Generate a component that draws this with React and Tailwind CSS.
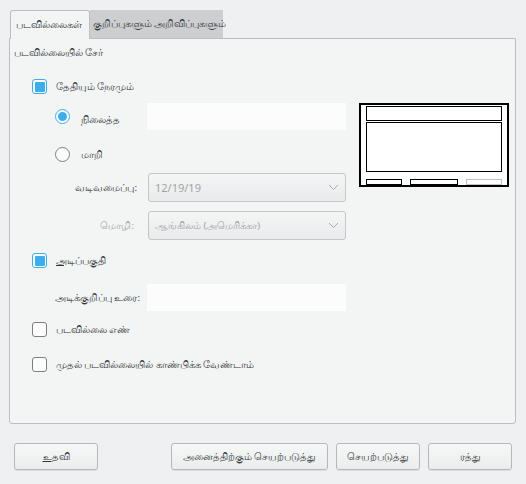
import React from 'react';

const Check = ({ checked }) => (
    <span className={`w-[15px] h-[15px] shrink-0 rounded-[3px] border flex items-center justify-center bg-[#fcfcfc] ${checked ? 'border-[#3daee9]' : 'border-[#7c7e80]'}`}>
        {checked && <span className="w-[10px] h-[10px] bg-[#3daee9] rounded-[1px]" />}
    </span>
);

const Radio = ({ checked }) => (
    <span className={`w-[15px] h-[15px] shrink-0 rounded-full border flex items-center justify-center bg-[#fcfcfc] ${checked ? 'border-[#3daee9]' : 'border-[#7c7e80]'}`}>
        {checked && <span className="w-[9px] h-[9px] bg-[#3daee9] rounded-full" />}
    </span>
);

const Chevron = () => (
    <svg width="11" height="7" viewBox="0 0 11 7" className="shrink-0">
        <path d="M1 1 L5.5 5.5 L10 1" fill="none" stroke="#a8aaac" strokeWidth="1" />
    </svg>
);

const Combo = ({ value }) => (
    <div className="w-[198px] h-[29px] rounded-[3px] border border-[#c4c6c8] bg-gradient-to-b from-[#f4f5f5] to-[#e9eaeb] flex items-center justify-between pl-[6px] pr-[6px] text-[#a2a4a6]">
        <span className={value.startsWith('1') ? 'text-[11px]' : ''}>{value}</span>
        <Chevron />
    </div>
);

const Button = ({ children, className = '' }) => (
    <button className={`h-[27px] rounded-[3px] border border-[#b6b8ba] bg-gradient-to-b from-[#f6f7f7] to-[#ebecec] shadow-[0_1px_0_rgba(0,0,0,0.08)] text-[#31363b] flex items-center justify-center ${className}`}>
        {children}
    </button>
);

const Preview = () => (
    <svg width="150" height="84" viewBox="0 0 150 84" className="shrink-0">
        <rect x="1" y="1" width="148" height="82" fill="#fff" stroke="#000" strokeWidth="2" />
        <rect x="7.5" y="3.5" width="135" height="14" fill="none" stroke="#000" strokeWidth="1" />
        <rect x="7.5" y="19.5" width="135" height="49" fill="none" stroke="#000" strokeWidth="1" />
        <rect x="7.5" y="76.5" width="35" height="5" fill="none" stroke="#000" strokeWidth="1" />
        <rect x="51.5" y="76.5" width="47" height="5" fill="none" stroke="#000" strokeWidth="1" />
        <rect x="107.5" y="76.5" width="35" height="5" fill="none" stroke="#c2c2c2" strokeWidth="1" />
    </svg>
);

const App = () => {
    return (
        <div className="w-[526px] h-[484px] bg-[#eff0f1] pl-[9px] pt-[10px] text-[9.6px] leading-[14px] whitespace-nowrap text-[#31363b] font-['Noto_Sans','DejaVu_Sans',sans-serif]">
            {/* tabs */}
            <div className="flex ml-px h-[28px]">
                <div className="w-[80px] h-[29px] -mb-px relative z-10 bg-[#f3f4f4] border border-b-0 border-[#bcbebf] rounded-t-[3px] flex items-center pl-[5px]">
                    படவில்லைகள்
                </div>
                <div className="w-[133px] h-[28px] bg-[#cdcecf] flex items-center pl-[3px]">
                    குறிப்புகளும் அறிவிப்புகளும்
                </div>
            </div>

            {/* panel */}
            <div className="w-[507px] h-[386px] bg-[#f3f4f4] border border-[#bcbebf] rounded-b-[3px] flex flex-col">
                <div className="mt-[7px] pl-[4px] h-[14px]">படவில்லையில் சேர்</div>

                <div className="mt-[19px] pl-[22px] h-[15px] flex items-center gap-[9px]">
                    <Check checked />
                    <span>தேதியும் நேரமும்</span>
                </div>

                <div className="mt-[9px] flex">
                    <div className="flex flex-col">
                        <div className="h-[27px] flex items-center pl-[45px]">
                            <Radio checked />
                            <span className="ml-[11px] w-[66px] mt-[6px]">நிலைத்த</span>
                            <div className="w-[199px] h-[27px] bg-[#fcfcfc]" />
                        </div>
                        <div className="mt-[17px] h-[15px] flex items-center pl-[45px]">
                            <Radio />
                            <span className="ml-[11px]">மாறி</span>
                        </div>
                        <div className="mt-[11px] flex items-center">
                            <span className="w-[127px] text-right">வடிவமைப்பு:</span>
                            <div className="ml-[11px]"><Combo value="12/19/19" /></div>
                        </div>
                        <div className="mt-[9px] flex items-center">
                            <span className="w-[124px] text-right text-[#a2a4a6]">மொழி:</span>
                            <div className="ml-[14px]"><Combo value="ஆங்கிலம் (அமெரிக்கா)" /></div>
                        </div>
                    </div>
                    <div className="ml-[13px]">
                        <Preview />
                    </div>
                </div>

                <div className="mt-[13px] pl-[22px] h-[15px] flex items-center gap-[9px]">
                    <Check checked />
                    <span><span className="underline">அ</span>டிப்பகுதி</span>
                </div>

                <div className="mt-[16px] h-[27px] flex items-center pl-[45px]">
                    <span className="w-[92px]">அடிக்குறிப்பு உரை:</span>
                    <div className="w-[199px] h-[27px] bg-[#fcfcfc]" />
                </div>

                <div className="mt-[11px] pl-[22px] h-[15px] flex items-center gap-[9px]">
                    <Check />
                    <span>படவில்லை எண்</span>
                </div>

                <div className="mt-[20px] pl-[22px] h-[15px] flex items-center gap-[9px]">
                    <Check />
                    <span>முதல் படவில்லையில் காண்பிக்க வேண்டாம்</span>
                </div>
            </div>

            {/* buttons */}
            <div className="mt-[19px] flex pl-[5px]">
                <Button className="w-[84px]"><span className="underline">உ</span>தவி</Button>
                <Button className="w-[157px] ml-[73px]">அனைத்திற்கும் செயற்படுத்து</Button>
                <Button className="w-[84px] ml-[8px]">செயற்படுத்து</Button>
                <Button className="w-[84px] ml-[8px]">ரத்து</Button>
            </div>
        </div>
    );
};

export default App;
